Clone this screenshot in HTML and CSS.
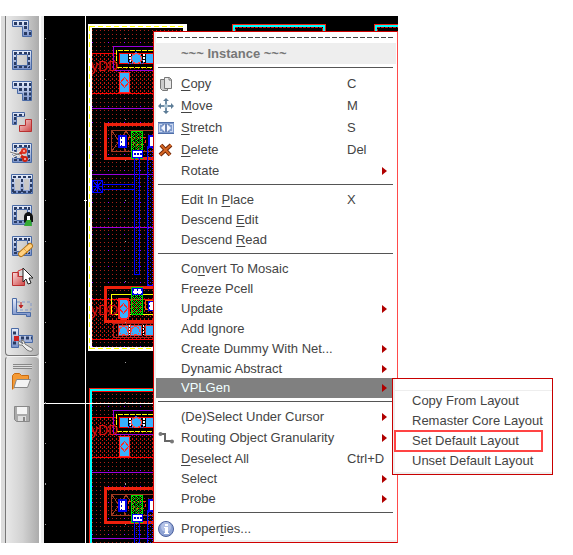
FILE: index.html
```
<!DOCTYPE html>
<html lang="en">
<head>
<meta charset="utf-8">
<title>Layout Editor</title>
<link rel="stylesheet" href="styles.css">
</head>
<body>
<main class="editor">
  <div class="toolbar" role="toolbar" aria-label="Editing tools">
    <div class="tools tools-edit">
      <button class="tool" aria-label="Path"><svg viewBox="0 0 20 20"><path class="shape" d="M.5 1.5h16v10h3v6h-9v-10h-10z"/><path class="bits" d="M2 4.500h13M13.500 7v4M12 14.500h7"/></svg></button>
      <button class="tool" aria-label="Ring"><svg viewBox="0 0 20 20"><path class="shape" fill-rule="evenodd" d="M.5.5h19v19H.5zM4.500 4.500v11h11v-11z"/><path class="bits thin" d="M2 3h16M2 17h16M3 2v16M17 2v16"/></svg></button>
      <button class="tool" aria-label="Polygon"><svg viewBox="0 0 20 20"><path class="shape" d="M.5.5h19v19h-9v-7h-5v-5h-5z"/><path class="bits" d="M2 3.500h17M7 8.500h12M12 13h7M12 17.500h7"/></svg></button>
      <button class="tool" aria-label="Chop shape"><svg viewBox="0 0 20 20"><path class="shape" d="M.5.5h12v4h-8v8h-4z"/><path class="bits thin" d="M2 3h11M3 5v7"/><path class="red" d="M13.500 7.500h6v12h-12v-6h6z"/></svg></button>
      <button class="tool" aria-label="Cut ring"><svg viewBox="0 0 20 20"><path class="shape" fill-rule="evenodd" d="M.5.5h19v19H.5zM4.500 4.500v11h11v-11z"/><path class="bits thin" d="M2 3h16M2 17h16M3 2v16M17 2v16"/><path d="M-2 9l11 3M0 14l9-5" stroke="#eee" stroke-width="3"/><path d="M-2 9l10 3M1 13l7-3" stroke="#777"/><path d="M8 11l3-3M9 13l3 2" stroke="#c21" stroke-width="3"/><circle cx="12" cy="8" r="2" fill="#fbb" stroke="#d32" stroke-width="2"/><circle cx="13" cy="16" r="2" fill="#fbb" stroke="#c21" stroke-width="2"/></svg></button>
      <button class="tool" aria-label="Array"><svg viewBox="0 0 20 20"><path class="shape" d="M-.5.500h21v19h-21z"/><path class="hole" d="M3 5h5v11H3zM12 5h5v11h-5z"/><path class="bits thin" d="M1 3h19M1 18h19M1 5v13M10 5v13M19 5v13"/></svg></button>
      <button class="tool" aria-label="Lock ring"><svg viewBox="0 0 20 20"><path class="shape" fill-rule="evenodd" d="M.5.5h19v19H.5zM4.500 4.500v11h11v-11z"/><path class="bits thin" d="M2 3h16M2 17h16M3 2v16M17 2v16"/><path d="M12 17v-5q0-4 4-5q5 1 5 5v5z" fill="#111"/><path d="M12 21l2-5 2-2 3 1 1 6z" fill="#3a3"/><path d="M15 11h3v4h-3z" fill="#fff"/></svg></button>
      <button class="tool" aria-label="Heal ring"><svg viewBox="0 0 20 20"><path class="shape" fill-rule="evenodd" d="M.5.5h19v19H.5zM4.500 4.500v11h11v-11z"/><path class="bits thin" d="M2 3h16M2 17h16M3 2v16M17 2v16"/><path d="M9 18l9-8" stroke="#b87818" stroke-width="6" stroke-linecap="round"/><path d="M9 18l9-8" stroke="#ffd080" stroke-width="4" stroke-linecap="round"/><path d="M12 13l4 4" stroke="#e0a040"/></svg></button>
      <button class="tool" aria-label="Pick shape"><svg viewBox="0 0 20 20"><path class="red" d="M.5 5.500h6v4h6v9h-12z"/><path d="M6 10V4l5-2 2 7" fill="none" stroke="#c33"/><path d="M11 1v14l3-3 2 5 3-1-2-5h4z" fill="#fff" stroke="#222"/></svg></button>
      <button class="tool" aria-label="Align"><svg viewBox="0 0 20 20"><path class="shape" d="M.5.500h4v14h14v4h-4v-2H.5z"/><path d="M5 4h14v8H5" fill="none" stroke="#8298c8" stroke-dasharray="3 2"/><path d="M9 4v5M7 7l2 3 2-3" stroke="#b22" fill="#b22"/></svg></button>
      <button class="tool" aria-label="Configure shape"><svg viewBox="0 0 20 20"><path class="shape" d="M-.5-.5h7v7h14v7h-14v5h-7z"/><path class="bits" d="M1 4h5M1 14h4M9 9h11"/><path d="M2 7h5v5H2z" fill="#c22"/><path d="M7 12q-2 5 3 4l5 5q5 3 6-1l-8-5q0-4-4-4l2 4z" fill="#eee" stroke="#777"/></svg></button>
    </div>
    <div class="tools tools-file">
      <span class="grip"></span>
      <button class="tool" aria-label="Open"><svg viewBox="0 0 20 20"><path d="M.5 17.500v-14l2-2h5l2 2h7v4" fill="#f49a35" stroke="#c96c12"/><path d="M4.500 7.500h14l-3 8H2z" fill="#f4f4f4" stroke="#888"/></svg></button>
      <button class="tool" aria-label="Save"><svg viewBox="0 0 20 20"><path d="M2.500 3.500h15v15h-13l-2-2z" fill="#aaa" stroke="#888"/><path d="M5 4h10v7H5z" fill="#f4f4f4"/><path d="M6 13h8v5H6z" fill="#ddd"/><path d="M11 14h2v4h-2z" fill="#888"/></svg></button>
    </div>
  </div>

  <section class="workspace">
    <svg class="drawing" aria-label="Layout canvas">
      <defs>
        <linearGradient id="blue" x1="0" y1="0" x2="0" y2="1"><stop offset="0" stop-color="#e8eefb"/><stop offset="1" stop-color="#7890c8"/></linearGradient>
        <linearGradient id="rose" x1="0" y1="0" x2="1" y2="1"><stop offset="0" stop-color="#fbdcdc"/><stop offset="1" stop-color="#cc4444"/></linearGradient>
        <pattern id="dots" width="4" height="4" patternUnits="userSpaceOnUse"><path d="M0 2h1v1H0z" fill="#a82018"/></pattern>
        <pattern id="dense" width="4" height="4" patternUnits="userSpaceOnUse"><path d="M2 0h1v1H2zM0 2h1v2H0z" fill="#c8180c"/></pattern>
        <pattern id="violet" width="16" height="16" patternUnits="userSpaceOnUse"><path d="M12 10h1v1h-1z" fill="#a000ff"/></pattern>
        <pattern id="green" width="4" height="4" patternUnits="userSpaceOnUse"><path d="M0 0h1v1H0zM1 1h1v1H1zM2 2h1v1H2zM3 3h1v1H3zM3 1h1v1H3zM1 3h1v1H1z" fill="#0f0"/></pattern>
        <pattern id="weave" width="4" height="4" patternUnits="userSpaceOnUse"><path d="M0 0h1v1H0zM2 2h1v1H2z" fill="#22f"/></pattern>
        <pattern id="contact" width="4" height="4" patternUnits="userSpaceOnUse"><path d="M0 0h4v4H0z" fill="#fff"/><path d="M1 1h1v2H1z" fill="#00d"/></pattern>
        <g id="diamond"><path d="M0-5l4 5-4 5-4-5z" fill="none" stroke="#f22"/></g>
        <g id="cell" fill="none" shape-rendering="crispEdges">
          <path d="M92 28h91v320H92z" fill="url(#dots)"/>
          <path d="M92 28h91v320H92z" fill="url(#violet)"/>
          <path d="M92 54h91v40H92zM92 300h91v39H92z" fill="url(#dense)"/>
          <path d="M91.500 350V27.500h92V350M91 53.500h92M91 93.500h92M91 299.500h92M91 339.500h92" stroke="#f00"/>
          <path d="M183 46.500h-69.500v24H183M91 108.500h92M91 174.500h92M91 227.500h92" stroke="#90d"/>
          <path d="M117 51h66v17h-66z" fill="#000"/>
          <path d="M183 50.500h-66.500v17H183" stroke="#ff0" stroke-dasharray="5 1"/>
          <path d="M183 53.500h-63.500v10H183" stroke="#f00"/>
          <path d="M120 54h8v9h-8zM132 54h9v9h-9zM146 54h9v9h-9z" fill="#38b0ff"/>
          <path d="M129.500 54v9M143.500 54v9" stroke="#fff" stroke-width="2" stroke-dasharray="2 1"/>
          <path d="M128 63l8-11 8 11z" stroke="#26f" stroke-dasharray="1 1"/>
          <circle cx="136.500" cy="58.500" r="5" fill="#38b0ff" stroke="#f44"/>
          <path d="M119.500 72.500h10v20h-10z" fill="#38b0ff" stroke="#f22"/><use href="#diamond" x="124.500" y="82.500"/>
          <text x="91" y="71" class="net">yDD</text>
          <path d="M170 124.500h-64.500v34H170" stroke="#ee200c" stroke-width="3"/>
          <path d="M170 130.500h-58.500v21H170M112 131l14 20M112 151l14-20M126 131l14 20" stroke="#a43a20"/>
          <path d="M118.500 135.500h7v11h-7zM148.500 135.500h7v11h-7z" fill="url(#contact)" stroke="#00e" stroke-width="2"/>
          <path d="M128 137h17v7h-17z" stroke="#f30" stroke-dasharray="3 2"/>
          <path d="M131.500 131.500h11v27h-11z" fill="url(#green)" stroke="#0d0"/>
          <path d="M135 132v26M139 132v26" stroke="#060"/>
          <path d="M132.500 150.500h10v7h-10z" fill="#fff" stroke="#00f"/><path d="M134 153.500h8" stroke="#00d" stroke-width="2" stroke-dasharray="2 1"/>
          <path d="M134 158h6v117h-6zM147 145h6v140h-6z" fill="url(#weave)"/>
          <path d="M134.500 158v116.500h5V158M147.500 146v139.500h6V146" stroke="#00f"/>
          <path d="M102 184.500h32M102 189.500h32M92.500 180.500h10v12h-10zM92 186.500h10M97.500 180v12M93 181l9 11M102 181l-9 11" stroke="#00f"/>
          <path d="M170 287.500h-64.500v34H170" stroke="#ee200c" stroke-width="3"/>
          <path d="M170 294.500h-58.500v20H170" stroke="#ff0"/>
          <path d="M145 300.500h10v9h-10z" stroke="#f60"/>
          <path d="M131.500 287.500h11v27h-11z" fill="url(#green)" stroke="#0d0"/>
          <path d="M132.500 288.500h10v6h-10z" fill="url(#contact)" stroke="#00f"/>
          <text x="91" y="315" class="net">yDD</text>
          <rect x="118.500" y="298.500" width="10" height="20" rx="2" fill="#38b0ff" stroke="#f22" stroke-width="2"/><use href="#diamond" x="123.500" y="308.500"/>
          <path d="M113 323.500h70M113.500 323v14M113 337.500h70" stroke="#a22"/>
          <path d="M118.500 325.500h10v10h-10zM130.500 325.500h11v10h-11zM145.500 325.500h10v10h-10z" fill="#38b0ff" stroke="#d33"/>
          <path d="M129.500 325v10M143.500 325v10" stroke="#fff" stroke-dasharray="2 1"/>
          <circle cx="123.500" cy="330.500" r="4" stroke="#f44"/><circle cx="135.500" cy="330.500" r="4" stroke="#f44"/>
          <path d="M148.500 301.500h7v9h-7z" fill="url(#contact)" stroke="#00e"/>
        </g>
      </defs>
      <g transform="translate(-44 -16)" fill="none" shape-rendering="crispEdges">
        <use href="#cell"/>
        <path d="M90 26h95v323H90z" stroke="#fff" stroke-width="4"/>
        <path d="M89.500 26v323M90 26h95M90 348.500h95" stroke="#ff0" stroke-width="1" stroke-dasharray="5 3"/>
        <use href="#cell" y="364"/>
        <path d="M89.500 560V388.500h94" stroke="#f02010"/>
        <path d="M91 560V390h93" stroke="#0ff" stroke-width="2"/>
        <path d="M232.500 40V24.500h93V40M374.500 40V24.500h93" stroke="#f02010"/>
        <path d="M234 40V26h90v14M376 40V26h90" stroke="#0ff" stroke-width="2"/>
        <path d="M235.500 40V27.500h87V40M377.500 40V27.500h87" stroke="#d01010" stroke-dasharray="3 1"/>
        <path d="M85.500 16v600M44 403.500h600M84 200.500h3" stroke="#fff"/>
        <path d="M45.500 38v580M125.500 38v580" stroke="#999" stroke-dasharray="1 39.500"/>
      </g>
    </svg>

    <div class="menu" role="menu" aria-label="Instance">
      <div class="tear"></div>
      <h1 class="title">~~~ Instance ~~~</h1>
      <hr>
      <button class="item tall" role="menuitem"><span class="icon"><svg viewBox="0 0 16 16"><path d="M2.500 3.500h7v11h-5l-2-2z" fill="#ccc" stroke="#777"/><path d="M6.500 1.500h5l2 2v9h-7z" fill="#e8e8e8" stroke="#777"/><path d="M11 2v2h2" fill="none" stroke="#777"/></svg></span><span class="name"><u>C</u>opy</span><kbd>C</kbd></button>
      <button class="item tall" role="menuitem"><span class="icon"><svg viewBox="0 0 16 16"><path d="M8 2v12M2 8h12" stroke="#6f8da6" stroke-width="2"/><path d="M8 0l3 3H5zM8 16l3-3H5zM0 8l3-3v6zM16 8l-3-3v6z" fill="#5c7c96"/><circle cx="8" cy="8" r="2" fill="#adc4d4"/></svg></span><span class="name"><u>M</u>ove</span><kbd>M</kbd></button>
      <button class="item tall" role="menuitem"><span class="icon"><svg viewBox="0 0 16 16"><path d="M0 2.500h16v11H0z" fill="#7f9bcd"/><path d="M0 2.500h16M0 13.500h16" stroke="#4f6ea8"/><path d="M5 4h6v8H5z" fill="#6a82b4"/><path d="M1 4h3v1H2v6h2v1H1zM15 4h-3v1h2v6h-2v1h3z" fill="#c9d6f0"/><path d="M3 8l4-4v8zM13 8L9 4v8z" fill="#f3f6ff"/></svg></span><span class="name"><u>S</u>tretch</span><kbd>S</kbd></button>
      <button class="item tall" role="menuitem"><span class="icon"><svg viewBox="0 0 16 16"><path d="M3 3l9 10M13 3L2 13" stroke="#6d2508" stroke-width="4"/><path d="M3 3l9 10M13 3L2 13" stroke="#d56724" stroke-width="2"/></svg></span><span class="name"><u>D</u>elete</span><kbd>Del</kbd></button>
      <button class="item more" role="menuitem"><span class="name">Rotate</span></button>
      <hr>
      <button class="item" role="menuitem"><span class="name">Edit In <u>P</u>lace</span><kbd>X</kbd></button>
      <button class="item" role="menuitem"><span class="name">Descend <u>E</u>dit</span></button>
      <button class="item" role="menuitem"><span class="name">Descend <u>R</u>ead</span></button>
      <hr>
      <button class="item" role="menuitem"><span class="name">Co<u>n</u>vert To Mosaic</span></button>
      <button class="item" role="menuitem"><span class="name">Freeze Pcell</span></button>
      <button class="item more" role="menuitem"><span class="name">Update</span></button>
      <button class="item" role="menuitem"><span class="name">Add Ignore</span></button>
      <button class="item more" role="menuitem"><span class="name">Create Dummy With Net...</span></button>
      <button class="item more" role="menuitem"><span class="name">Dynamic Abstract</span></button>
      <div class="branch">
        <button class="item more active" role="menuitem" aria-expanded="true"><span class="name">VPLGen</span></button>
        <div class="submenu" role="menu" aria-label="VPLGen">
          <button class="subitem" role="menuitem">Copy From Layout</button>
          <button class="subitem" role="menuitem">Remaster Core Layout</button>
          <button class="subitem marked" role="menuitem">Set Default Layout</button>
          <button class="subitem" role="menuitem">Unset Default Layout</button>
        </div>
      </div>
      <hr>
      <button class="item more" role="menuitem"><span class="name">(De)Select Under Cursor</span></button>
      <button class="item tall more" role="menuitem"><span class="icon"><svg viewBox="0 0 16 16"><path d="M2 4h5v7h7" fill="none" stroke="#666" stroke-width="2"/><circle cx="2.500" cy="4" r="2" fill="#777"/><circle cx="14" cy="11.500" r="2" fill="#777"/></svg></span><span class="name">Routing Object Granularity</span></button>
      <button class="item" role="menuitem"><span class="name"><u>D</u>eselect All</span><kbd>Ctrl+D</kbd></button>
      <button class="item more" role="menuitem"><span class="name">Select</span></button>
      <button class="item more" role="menuitem"><span class="name">Probe</span></button>
      <hr>
      <button class="item tall" role="menuitem"><span class="icon"><svg viewBox="0 0 16 16"><circle cx="8" cy="8" r="7.500" fill="#8fa3d4" stroke="#4a5f9c"/><circle cx="8" cy="6" r="5" fill="#b4c2e6"/><path d="M7 3h3v2H7zM6 6h4v6h1v1H6v-1h1V7H6z" fill="#fff"/></svg></span><span class="name">Proper<u>t</u>ies...</span></button>
    </div>
  </section>
</main>
</body>
</html>
```
FILE: styles.css
```
* { box-sizing: border-box; }

body {
  margin: 0;
  background: #fff;
  color: #444;
  font: 13px/20px "Liberation Sans", Arial, sans-serif;
}

button {
  margin: 0;
  padding: 0;
  border: 0;
  background: none;
  color: inherit;
  font: inherit;
  text-align: left;
}

.editor {
  display: flex;
  padding: 16px 175px 12px 1px;
}

/* Toolbar */
.toolbar {
  display: flex;
  flex-direction: column;
  flex: none;
  width: 43px;
  padding: 0 5px 0 4px;
  background: linear-gradient(90deg, #dcdcdc 38px, #fff 38px, #fff 40px, #eee 40px);
}

.tools {
  display: flex;
  flex-direction: column;
  align-items: flex-start;
  gap: 11px;
  padding: 3px 0 6px 6px;
  border-left: 1px solid #777;
  background: linear-gradient(90deg, #e8e8e8, #d2d2d2 50%, #acacac);
}

.tools-edit {
  border-bottom: 1px solid #777;
  border-radius: 0 0 4px 4px;
}

.tools-file {
  flex: 1;
  padding-top: 7px;
  border-top: 1px solid #f4f4f4;
  border-radius: 4px 4px 0 0;
}

.tool {
  width: 20px;
  height: 20px;
}

.tool svg {
  display: block;
  width: 20px;
  height: 20px;
  overflow: visible;
}

.grip {
  width: 19px;
  height: 5px;
  margin: 0 0 -8px 1px;
  background: repeating-linear-gradient(#888 0 1px, #ddd 1px 2px);
}

.shape { fill: url(#blue); stroke: #4a6aa5; }
.hole { fill: #c8c8c8; }
.red { fill: url(#rose); stroke: #b83030; }
.bits { fill: none; stroke: #283a62; stroke-width: 3; stroke-dasharray: 3 2; }
.bits.thin { stroke-width: 2; }

/* Canvas */
.workspace {
  position: relative;
  flex: 1;
  min-width: 0;
  padding: 15px 0 0 109px;
  background: #000;
}

.drawing {
  position: absolute;
  inset: 0;
  width: 100%;
  height: 100%;
}

.net {
  fill: #e01010;
  font: 14px "Liberation Sans", sans-serif;
}

/* Context menu */
.menu {
  position: relative;
  padding: 5px 4px 2px 2px;
  border: 1px solid #d00000;
  border-right-color: #ff4a4a;
  background: #fff;
  box-shadow: inset 2px -2px #eee;
}

.tear {
  height: 1px;
  margin: 0 0 5px 1px;
  background: repeating-linear-gradient(90deg, #444 0 5px, #fff 5px 7px);
}

.title {
  margin: 0 -3px 0 0;
  padding-left: 25px;
  background: #eee;
  color: #777;
  font-size: 13px;
  line-height: 21px;
}

hr {
  height: 1px;
  margin: 3px 0 5px 2px;
  border: 0;
  background: #555;
}

.item {
  display: flex;
  align-items: center;
  position: relative;
  width: 100%;
  height: 20px;
  padding-left: 25px;
  white-space: nowrap;
}

.tall { height: 22px; }

.icon {
  width: 16px;
  height: 16px;
  margin-left: -23px;
  margin-right: 7px;
}

.icon svg {
  display: block;
  width: 16px;
  height: 16px;
}

.name { flex: 1; }

u { text-underline-offset: 2px; }

kbd {
  width: 46px;
  font: inherit;
}

.more::after {
  content: "";
  margin-right: 6px;
  border: 4px solid transparent;
  border-left: 5px solid #b00000;
  border-right: 0;
}

.branch {
  position: relative;
  margin-top: -1px;
}

.active {
  background: #808080;
  color: #f0ffff;
}

/* Submenu lies over the canvas edge */
.submenu {
  position: absolute;
  top: 0;
  right: -160px;
  width: 161px;
  padding: 12px 4px 3px 2px;
  border: 1px solid #c80000;
  background: linear-gradient(#fff 11px, #eee 11px, #eee 12px, #fff 12px);
  box-shadow: inset 2px -2px #eee;
}

.subitem {
  display: block;
  width: 100%;
  height: 20px;
  padding-left: 17px;
  white-space: nowrap;
}

.marked {
  width: 147px;
  outline: 2px solid #ff4444;
  outline-offset: -1px;
}
```
